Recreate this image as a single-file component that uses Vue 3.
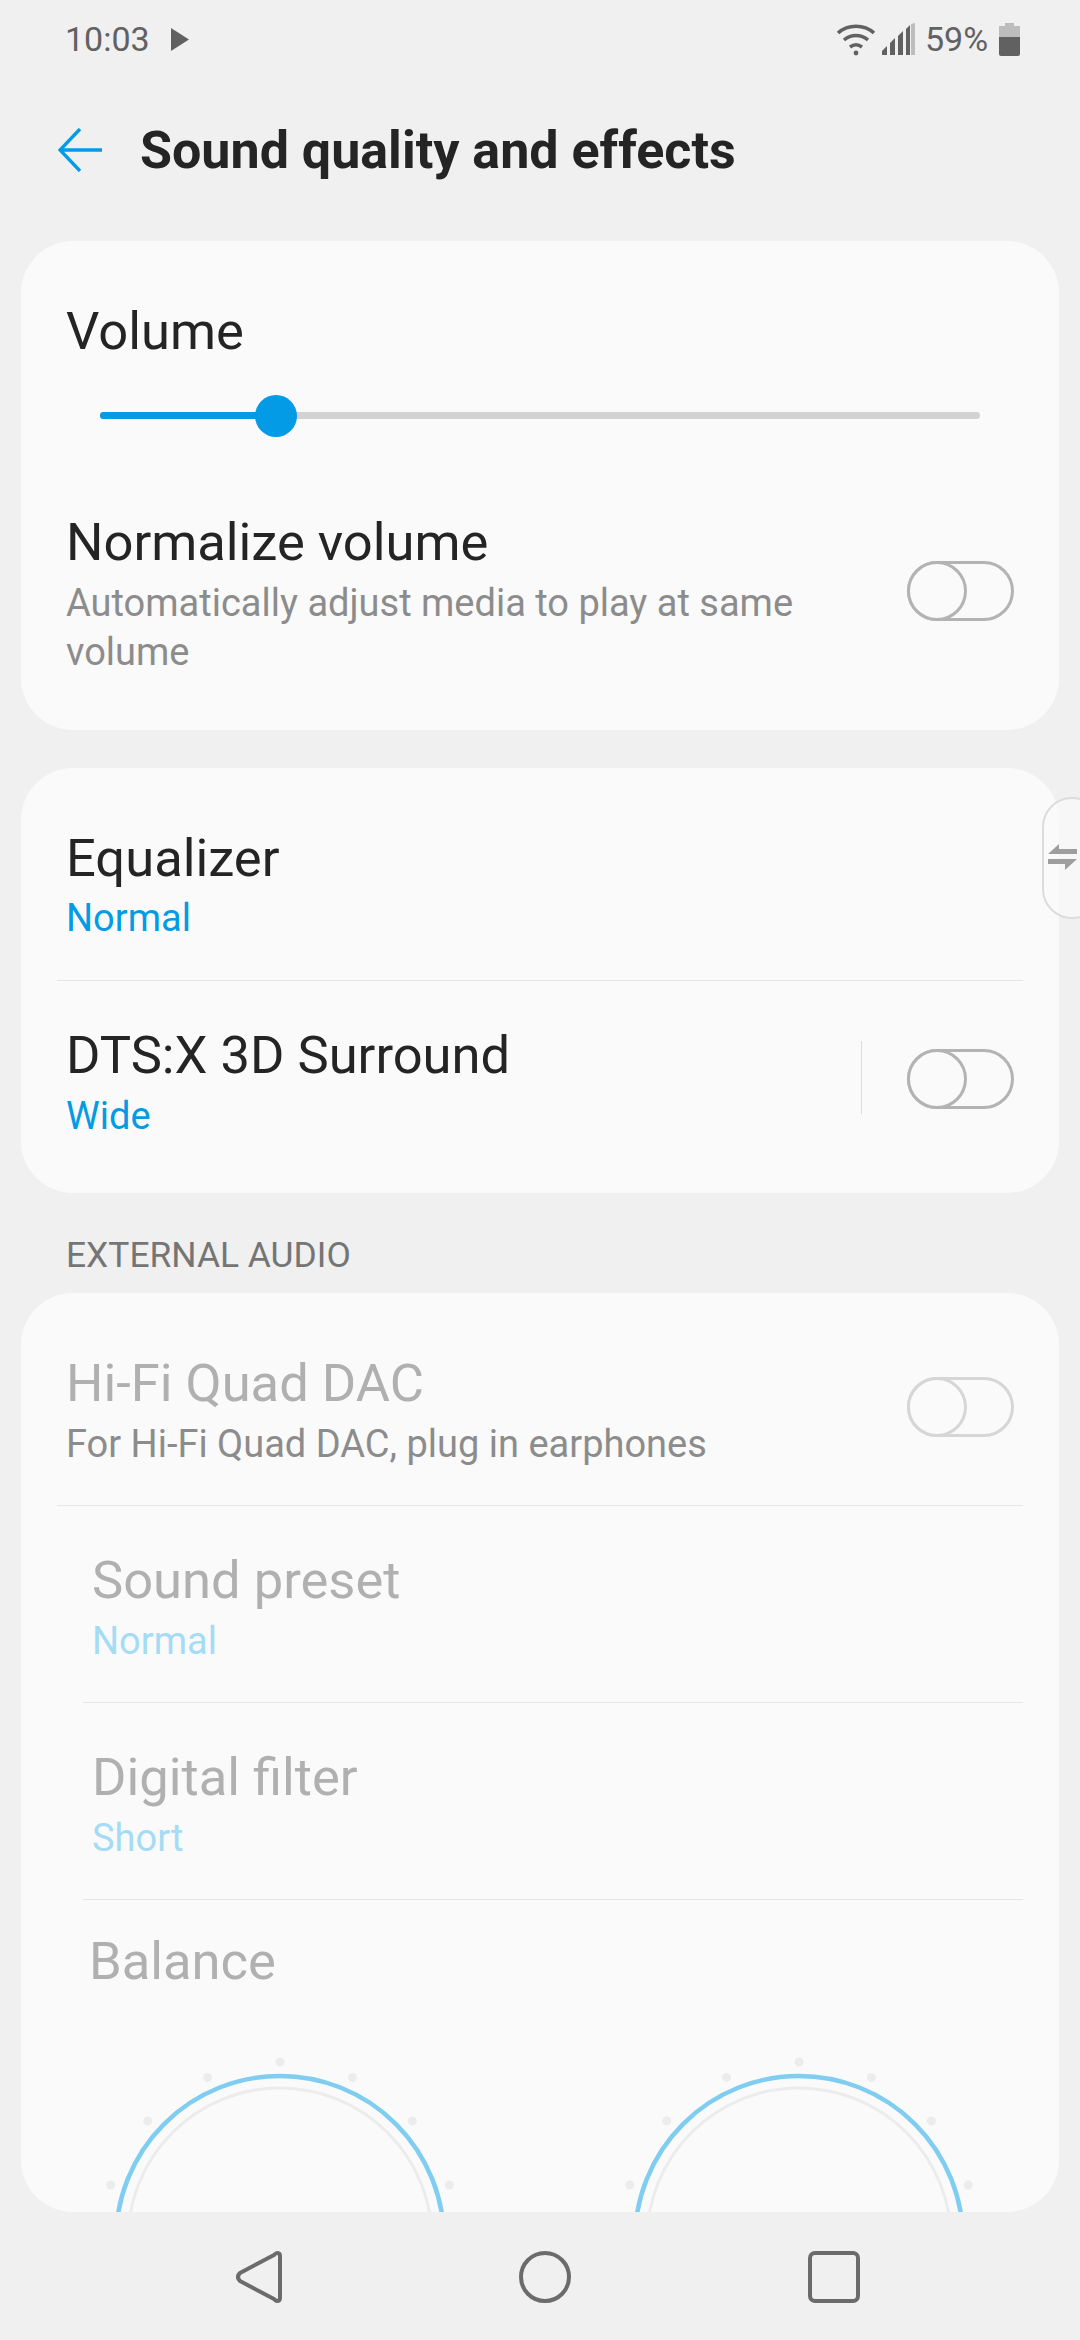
<template>
  <div class="phone">
    <div class="status">
      <div class="status-left">
        <span>10:03</span>
        <svg class="play" width="18" height="23" viewBox="0 0 18 23"><path d="M0 0L18 11.5L0 23Z" fill="#616161" /></svg>
      </div>
      <div class="status-right">
        <svg width="40" height="33" viewBox="0 0 40 33" fill="none" stroke="#616161" stroke-width="3.6">
          <path d="M2 10C12 1 28 1 38 10" />
          <path d="M8 17C15 11 25 11 32 17" />
          <path d="M14 24C18 21 22 21 26 24" />
          <circle cx="20" cy="30" r="2.4" fill="#616161" stroke="none" />
        </svg>
        <svg class="signal" width="33" height="32" viewBox="0 0 33 32">
          <path d="M0 32V28L5 23V32Z" fill="#616161" />
          <path d="M8 32V20L13 15V32Z" fill="#616161" />
          <path d="M16 32V13L21 8V32Z" fill="#616161" />
          <path d="M24 32V6L28 2V32Z" fill="#616161" />
          <path d="M29 32V1L33 0V32Z" fill="#bdbdbd" />
        </svg>
        <span class="pct">59%</span>
        <svg class="battery" width="21" height="33" viewBox="0 0 21 33">
          <path d="M6 0H15V3H21V14H0V3H6Z" fill="#bdbdbd" />
          <path d="M0 14H21V31Q21 33 19 33H2Q0 33 0 31Z" fill="#616161" />
        </svg>
      </div>
    </div>

    <div class="header">
      <svg width="44" height="44" viewBox="0 0 44 44" fill="none" stroke="#039be5" stroke-width="3.4">
        <path d="M44 22H3" />
        <path d="M22 1L2 22L22 43" />
      </svg>
      <h1>Sound quality and effects</h1>
    </div>

    <div class="scroll">
      <section class="card first">
        <div class="title">Volume</div>
        <div class="slider">
          <div class="fill"></div>
          <div class="thumb"></div>
        </div>
        <div class="row normalize">
          <div class="text">
            <div class="title">Normalize volume</div>
            <div class="sub wrap">Automatically adjust media to play at same volume</div>
          </div>
          <div class="toggle"></div>
        </div>
      </section>

      <section class="card second">
        <div class="item eq">
          <div class="title">Equalizer</div>
          <div class="value">Normal</div>
        </div>
        <div class="rule"></div>
        <div class="row dts">
          <div class="text">
            <div class="title">DTS:X 3D Surround</div>
            <div class="value">Wide</div>
          </div>
          <div class="vline"></div>
          <div class="toggle"></div>
        </div>
      </section>

      <div class="section-label">EXTERNAL AUDIO</div>

      <section class="card third">
        <div class="row hifi">
          <div class="text">
            <div class="title off">Hi-Fi Quad DAC</div>
            <div class="sub">For Hi-Fi Quad DAC, plug in earphones</div>
          </div>
          <div class="toggle dim"></div>
        </div>
        <div class="rule"></div>
        <template v-for="opt in options" :key="opt.name">
          <div class="item indented">
            <div class="title off">{{ opt.name }}</div>
            <div class="value off">{{ opt.value }}</div>
          </div>
          <div class="rule short"></div>
        </template>
        <div class="title off balance">Balance</div>
        <div class="knobs">
          <svg v-for="n in 2" :key="n" class="knob" width="360" height="380" viewBox="-180 -190 360 380">
            <circle r="164" fill="none" stroke="#7fcdf0" stroke-width="4.5" />
            <circle r="152" fill="none" stroke="#ececec" stroke-width="3" />
            <circle v-for="d in dots" :key="d.a" :cx="d.x" :cy="d.y" r="4.5" fill="#ececec" />
          </svg>
        </div>
      </section>
    </div>

    <div class="nav">
      <svg width="46" height="52" viewBox="0 0 46 52" fill="none" stroke="#6b6b6b" stroke-width="4" stroke-linejoin="round">
        <path d="M44 5Q44 2 41 2Q40 2 38 4L4 22Q0 26 4 30L38 48Q40 50 41 50Q44 50 44 47Z" />
      </svg>
      <svg width="52" height="52" viewBox="0 0 52 52" fill="none" stroke="#6b6b6b" stroke-width="4">
        <circle cx="26" cy="26" r="24" />
      </svg>
      <svg width="52" height="52" viewBox="0 0 52 52" fill="none" stroke="#6b6b6b" stroke-width="4">
        <rect x="2" y="2" width="48" height="48" rx="5" />
      </svg>
    </div>

    <div class="handle">
      <svg width="30" height="26" viewBox="0 0 30 26">
        <path d="M12 0V5H30V10H1Z" fill="#9e9e9e" />
        <path d="M1 15H30L18 26V20H1Z" fill="#9e9e9e" />
      </svg>
    </div>
  </div>
</template>

<script setup>
const options = [
  { name: 'Sound preset', value: 'Normal' },
  { name: 'Digital filter', value: 'Short' }
]

// tick marks round each balance knob, every 24 degrees
const dots = [-72, -48, -24, 0, 24, 48, 72].map((a) => {
  const rad = (a * Math.PI) / 180
  return { a, x: 178 * Math.sin(rad), y: -178 * Math.cos(rad) }
})
</script>

<style>
html,
body {
  margin: 0;
  background: #f0f0f0;
}
</style>

<style scoped>
.phone {
  position: relative;
  width: 1080px;
  height: 2340px;
  display: flex;
  flex-direction: column;
  overflow: hidden;
  background: #f0f0f0;
  font-family: Roboto, sans-serif;
  color: #242424;
}

.status {
  height: 78px;
  flex: none;
  display: flex;
  justify-content: space-between;
  align-items: center;
  padding: 0 60px 0 65px;
  color: #616161;
  font-size: 34px;
}

.status-left,
.status-right {
  display: flex;
  align-items: center;
}

.play {
  margin-left: 21px;
}

.signal {
  margin-left: 6px;
}

.pct {
  margin-left: 10px;
  width: 62px;
}

.battery {
  margin-left: 12px;
}

.header {
  height: 144px;
  flex: none;
  display: flex;
  align-items: center;
  padding-left: 58px;
}

h1 {
  margin: 0 0 0 38px;
  font-size: 52px;
  font-weight: 700;
  letter-spacing: 0;
}

.scroll {
  flex: 1;
  min-height: 0;
  display: flex;
  flex-direction: column;
  padding: 19px 21px 0;
  gap: 38px;
  overflow: hidden;
}

.card {
  background: #fafafa;
  border-radius: 52px;
  flex: none;
  overflow: hidden;
}

.first {
  padding: 60px 0 53px 45px;
}

.second {
  padding: 60px 0 52px;
}

.third {
  flex: 1;
  padding-top: 60px;
  margin-top: -20px;
}

.title {
  font-size: 52.5px;
  line-height: 60px;
  white-space: nowrap;
}

.title.off {
  color: #b0b0b0;
}

.sub {
  font-size: 38px;
  line-height: 49px;
  color: #8c8c8c;
  margin-top: 7px;
}

.sub.wrap {
  width: 780px;
  margin-top: 7px;
}

.value {
  font-size: 38px;
  line-height: 49px;
  color: #039be5;
  margin-top: 7px;
}

.eq .value {
  margin-top: 6px;
}

.value.off {
  color: #a5dcf5;
}

.slider {
  position: relative;
  height: 7px;
  margin: 51px 0 0 34px;
  width: 880px;
  border-radius: 4px;
  background: #d2d2d2;
}

.fill {
  width: 176px;
  height: 100%;
  border-radius: 4px;
  background: #039be5;
}

.thumb {
  position: absolute;
  left: 155px;
  top: -17px;
  width: 42px;
  height: 42px;
  border-radius: 50%;
  background: #039be5;
}

.row {
  display: flex;
  align-items: flex-start;
}

.text {
  flex: 1;
  min-width: 0;
}

.normalize {
  margin-top: 93px;
  padding-right: 45px;
}

.normalize .toggle {
  margin-top: 49px;
}

.item {
  padding-left: 45px;
}

.eq {
  padding-bottom: 37px;
}

.rule {
  height: 1px;
  background: #e6e6e6;
  margin: 0 36px;
}

.rule.short {
  margin-left: 62px;
}

.dts {
  padding: 44px 45px 0 45px;
}

.dts .toggle {
  margin-top: 24px;
}

.vline {
  width: 1px;
  height: 73px;
  background: #dcdcdc;
  margin: 16px 45px 0 0;
}

.hifi {
  padding: 0 45px 36px 45px;
}

.hifi .toggle {
  margin-top: 24px;
}

.toggle {
  position: relative;
  flex: none;
  width: 107px;
  height: 60px;
  box-sizing: border-box;
  border: 3px solid #b3b3b3;
  border-radius: 30px;
}

.toggle::before {
  content: '';
  position: absolute;
  left: -3px;
  top: -3px;
  width: 60px;
  height: 60px;
  box-sizing: border-box;
  border: 3px solid #b3b3b3;
  border-radius: 50%;
  background: #fafafa;
}

.toggle.dim,
.toggle.dim::before {
  border-color: #d6d6d6;
}

.indented {
  padding: 44px 0 36px 71px;
}

.balance {
  margin: 31px 0 0 68px;
}

.knobs {
  display: flex;
  margin: 0 0 0 79px;
  gap: 159px;
  padding-top: 59px;
}

.knob {
  flex: none;
}

.section-label {
  flex: none;
  font-size: 35.4px;
  line-height: 40px;
  color: #757575;
  padding-left: 45px;
  margin-top: 4px;
}

.nav {
  height: 128px;
  flex: none;
  display: flex;
  align-items: flex-start;
  padding: 39px 220px 0 236px;
  justify-content: space-between;
  box-sizing: border-box;
}

.handle {
  position: absolute;
  left: 1042px;
  top: 797px;
  width: 60px;
  height: 122px;
  box-sizing: border-box;
  border: 2px solid #dcdcdc;
  border-radius: 38px;
  background: rgba(250, 250, 250, 0.75);
}

.handle svg {
  position: absolute;
  left: 3px;
  top: 45px;
}
</style>
